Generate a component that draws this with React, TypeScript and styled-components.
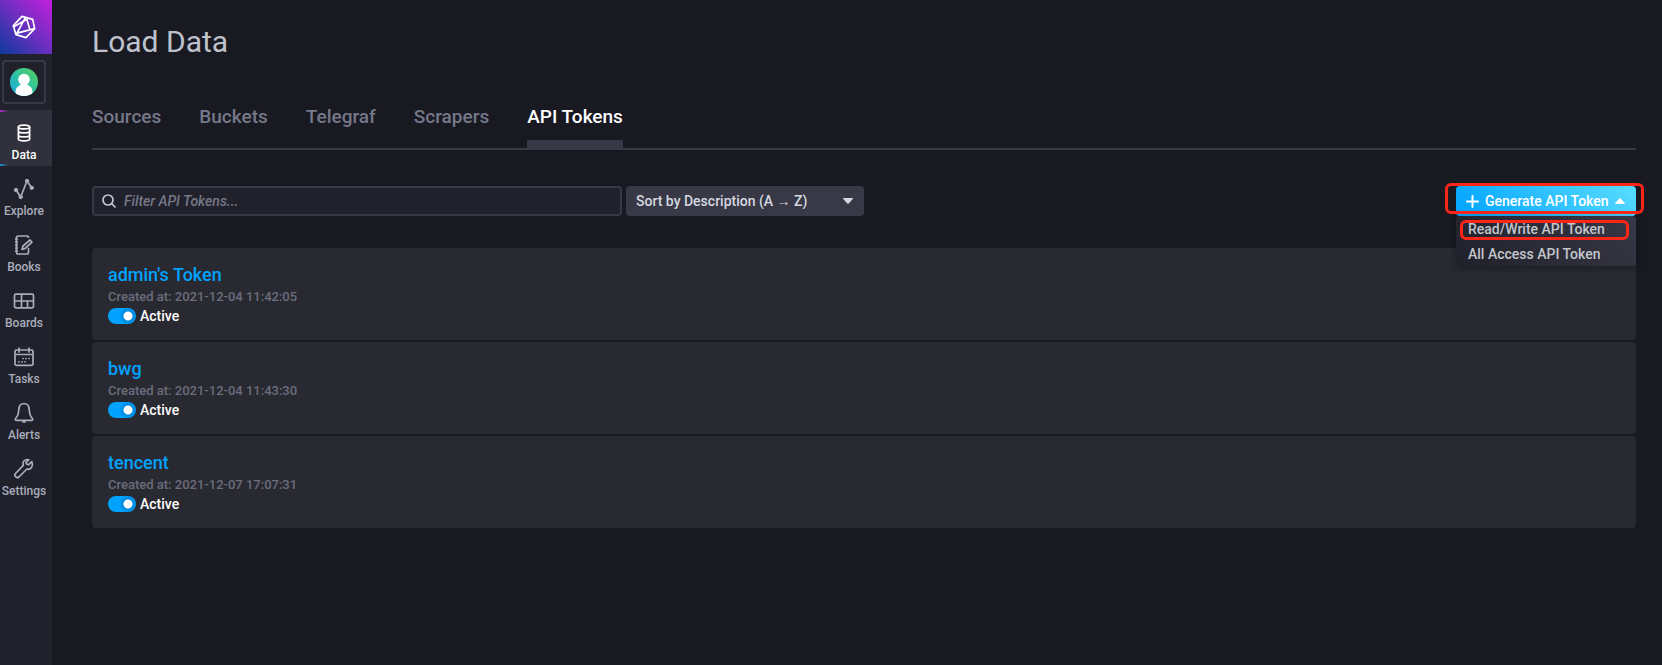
import React, { useState } from "react";
import styled, { createGlobalStyle } from "styled-components";

const GlobalStyle = createGlobalStyle`
  *, *::before, *::after { box-sizing: border-box; }
  body {
    margin: 0;
    background: #191922;
    color: #ffffff;
    font-family: Roboto, "Liberation Sans", sans-serif;
    font-weight: 500;
  }
  button, input, select { font-family: inherit; font-weight: inherit; }
`;

const Page = styled.div`
  display: flex;
  min-height: 100vh;
`;

const Sidebar = styled.nav`
  flex: 0 0 52px;
  display: flex;
  flex-direction: column;
  background: #21212b;
`;

const LogoLink = styled.a`
  display: flex;
  align-items: center;
  justify-content: center;
  height: 54px;
  padding-right: 4px;
  background: linear-gradient(45deg, #0b3a9c 0%, #6b2fc0 50%, #c41fdc 100%);
`;

const AvatarButton = styled.button`
  display: flex;
  align-items: center;
  justify-content: center;
  width: 44px;
  height: 44px;
  margin: 6px 2px;
  padding: 0;
  border: 2px solid #383846;
  border-radius: 4px;
  background: transparent;
`;

const NavItem = styled.a<{ $active?: boolean }>`
  display: flex;
  flex-direction: column;
  align-items: center;
  gap: 4px;
  height: 56px;
  padding: 12px 4px 0 0;
  font-size: 12px;
  line-height: 14px;
  white-space: nowrap;
  text-decoration: none;
  color: ${(p) => (p.$active ? "#ffffff" : "#a9adbb")};
  background: ${(p) =>
    p.$active
      ? "linear-gradient(90deg, #b02fd0, #31313d) top left / 8px 2px no-repeat, linear-gradient(90deg, #1a8fd8, #31313d) bottom left / 8px 2px no-repeat, #31313d"
      : "transparent"};

  svg { flex: none; }
`;

const Main = styled.main`
  flex: 1;
  min-width: 0;
  padding: 24px 26px 24px 40px;
`;

const Title = styled.h1`
  margin: 0;
  font-size: 30px;
  line-height: 36px;
  font-weight: 400;
  color: #bec2cc;
`;

const Tabs = styled.div`
  display: flex;
  gap: 38px;
  margin-top: 40px;
  border-bottom: 2px solid #383846;
`;

const Tab = styled.a<{ $active?: boolean }>`
  display: flex;
  flex-direction: column;
  height: 48px;
  padding-top: 5px;
  font-size: 19px;
  line-height: 24px;
  text-decoration: none;
  color: ${(p) => (p.$active ? "#ffffff" : "#757888")};

  &::after {
    content: "";
    height: 8px;
    margin-top: auto;
    border-radius: 2px 2px 0 0;
    background: ${(p) => (p.$active ? "#383846" : "transparent")};
  }
`;

const Toolbar = styled.div`
  display: flex;
  gap: 4px;
  margin-top: 36px;
`;

const SearchBox = styled.label`
  display: flex;
  align-items: center;
  gap: 8px;
  flex: 0 1 530px;
  height: 30px;
  padding: 0 8px;
  border: 2px solid #383846;
  border-radius: 4px;
  background: #21212b;
`;

const SearchInput = styled.input`
  flex: 1;
  min-width: 0;
  padding: 0;
  border: 0;
  outline: 0;
  background: transparent;
  font-size: 14px;
  line-height: 20px;
  color: #ffffff;

  &::placeholder {
    font-style: italic;
    color: #757888;
    opacity: 1;
  }
`;

const SortField = styled.div`
  flex: 0 0 238px;
  display: grid;
  align-items: center;

  & > * { grid-area: 1 / 1; }
  svg {
    justify-self: end;
    margin-right: 11px;
    color: #d5d8e0;
    pointer-events: none;
  }
`;

const SortSelect = styled.select`
  appearance: none;
  width: 100%;
  height: 30px;
  padding: 0 30px 0 10px;
  border: 0;
  border-radius: 4px;
  background: #383846;
  font-size: 14px;
  color: #d5d8e0;
`;

const Generate = styled.div`
  position: relative;
  flex: 0 0 180px;
  margin-left: auto;
`;

const GenerateButton = styled.button`
  display: flex;
  align-items: center;
  gap: 6px;
  width: 100%;
  height: 30px;
  padding: 0 11px 0 10px;
  border: 0;
  border-radius: 4px;
  background: linear-gradient(45deg, #00a3ff, #59dcff);
  font-size: 14px;
  white-space: nowrap;
  color: #ffffff;

  svg:last-child { margin-left: auto; }
`;

const Menu = styled.div`
  position: absolute;
  top: 30px;
  left: 0;
  right: 0;
  display: flex;
  flex-direction: column;
  height: 50px;
  border-radius: 4px;
  background: linear-gradient(45deg, #21212b, #383846);
  box-shadow: 0 2px 6px rgba(10, 10, 16, 0.4);
`;

const MenuItem = styled.button`
  height: 25px;
  padding: 0 12px;
  border: 0;
  background: transparent;
  font-size: 14px;
  text-align: left;
  color: #c3c5cc;
`;

const Highlight = styled.div<{ $inner?: boolean }>`
  position: absolute;
  inset: ${(p) => (p.$inner ? "34px 7px -24px 4px" : "-3px -8px 2px -11px")};
  border: 3px solid #fb2518;
  border-radius: 6px;
  pointer-events: none;
`;

const List = styled.div`
  display: flex;
  flex-direction: column;
  gap: 2px;
  margin-top: 32px;
`;

const Card = styled.article`
  display: flex;
  flex-direction: column;
  align-items: flex-start;
  height: 92px;
  padding: 16px;
  border-radius: 4px;
  background: #292932;
`;

const TokenName = styled.a`
  font-size: 18px;
  line-height: 22px;
  text-decoration: none;
  color: #00a3ff;
`;

const Created = styled.span`
  font-size: 13px;
  line-height: 22px;
  color: #6b6d7c;
`;

const ToggleLabel = styled.label`
  display: flex;
  align-items: center;
  gap: 4px;
  font-size: 14px;
  line-height: 16px;
`;

const Toggle = styled.input`
  appearance: none;
  width: 28px;
  height: 16px;
  margin: 0;
  border-radius: 8px;
  background: #434453;

  &:checked {
    background: radial-gradient(circle at 20px 8px, #ffffff 0 3px, #ffffff 4px, #0088dd 5px, #00a3ff 9px);
  }
`;

const CloudMark = () => (
  <svg width="24" height="24" viewBox="36 43 72 72" fill="none" stroke="#fff" strokeWidth="5" strokeLinejoin="round" aria-hidden="true">
    <path d="M66 47 98 56 104 84 78 111 48 102 40 75Z" />
    <path d="M40 79 82 55M76 51 50 99M80 54 90 88M104 84 48 98" />
  </svg>
);

const Avatar = () => (
  <svg width="28" height="28" viewBox="0 0 28 28" aria-hidden="true">
    <defs>
      <linearGradient id="avatar" x1="0" y1="1" x2="1" y2="0">
        <stop offset="0" stopColor="#18a5e8" />
        <stop offset="0.5" stopColor="#30c2a0" />
        <stop offset="1" stopColor="#58d05a" />
      </linearGradient>
      <clipPath id="round"><circle cx="14" cy="14" r="14" /></clipPath>
    </defs>
    <circle cx="14" cy="14" r="14" fill="url(#avatar)" />
    <g fill="#fff" clipPath="url(#round)">
      <circle cx="14" cy="11.5" r="5.800" />
      <path d="M10.500 14h7v3c3 .8 5 3.500 5 7v4h-17v-4c0-3.500 2-6.200 5-7Z" />
    </g>
  </svg>
);

const Icon = ({ children }: { children: React.ReactNode }) => (
  <svg width="22" height="22" viewBox="0 0 22 22" fill="none" stroke="currentColor" strokeWidth="1.700" strokeLinecap="round" strokeLinejoin="round" aria-hidden="true">
    {children}
  </svg>
);

const navItems = [
  {
    label: "Data",
    icon: (
      <>
        <ellipse cx="11" cy="5" rx="5.600" ry="1.900" />
        <path d="M5.400 5v12c0 2.600 11.200 2.600 11.200 0V5M5.400 9c0 2.600 11.200 2.600 11.200 0M5.400 13c0 2.600 11.200 2.600 11.200 0" />
      </>
    ),
  },
  {
    label: "Explore",
    icon: (
      <>
        <path d="M3 12 7.700 19 14 3 18.700 9.800" />
        <g fill="currentColor" strokeWidth="1">
          <circle cx="3" cy="12" r="1.700" />
          <circle cx="7.700" cy="19" r="1.700" />
          <circle cx="14" cy="3" r="1.700" />
          <circle cx="18.700" cy="9.800" r="1.700" />
        </g>
      </>
    ),
  },
  {
    label: "Books",
    icon: (
      <>
        <path d="M15.500 3.200 14.700 2H5.200Q3.500 2 3.500 3.700v14.600Q3.500 20 5.200 20h8.600q1.700 0 1.700-1.700v-3.800M9 15.500l1-3.500 7-6 2 2.200-7 6.300Z" />
        <path d="M2.700 5h1.600M2.700 8h1.600M2.700 11h1.600M2.700 14h1.600M2.700 17h1.600" />
      </>
    ),
  },
  {
    label: "Boards",
    icon: (
      <path d="M3 4.200h16q1.500 0 1.500 1.500v10.600q0 1.500-1.500 1.500H3q-1.500 0-1.500-1.500V5.700Q1.500 4.200 3 4.200ZM1.500 11h19M8.500 4.200v13.600M14.500 11v6.800" />
    ),
  },
  {
    label: "Tasks",
    icon: (
      <>
        <path d="M3.500 4h15q1.500 0 1.500 1.500v12.300q0 1.500-1.500 1.500h-15q-1.500 0-1.500-1.500V5.500Q2 4 3.500 4ZM2 8.500h18M6 2v4M16 2v4" />
        <path d="M10 12.500h.1M13 12.500h.1M16 12.500h.1M6 15.800h.1M9 15.800h.1M12 15.800h.1" />
      </>
    ),
  },
  {
    label: "Alerts",
    icon: (
      <path d="M11 1.500c-3.500 0-5 2.500-5.200 6-.2 4.500-1.200 7-3.300 9.200-.5.800 0 1.600.8 1.600h15.400c.8 0 1.300-.8.8-1.600-2.100-2.200-3.100-4.700-3.300-9.200-.2-3.500-1.700-6-5.200-6ZM10 20h2" />
    ),
  },
  {
    label: "Settings",
    icon: (
      <path d="M18.700 3.700 15.500 6.800 13.500 6 13 4.300l2.900-2.600c-4-1-6.800 2-5.600 5.600L2.500 15.500c-2 2 1.300 5.400 3.400 3.500l8-8c3.600 1.400 6.800-3 4.800-7.300Z" />
    ),
  },
];

const tabs = ["Sources", "Buckets", "Telegraf", "Scrapers", "API Tokens"];

const tokens = [
  { name: "admin's Token", created: "2021-12-04 11:42:05" },
  { name: "bwg", created: "2021-12-04 11:43:30" },
  { name: "tencent", created: "2021-12-07 17:07:31" },
];

const Caret = ({ up }: { up?: boolean }) => (
  <svg width="10" height="6" viewBox="0 0 10 6" fill="currentColor" aria-hidden="true">
    <path d={up ? "M0 6 .3 5 4.300.5q.7-.7 1.400 0L9.700 5 10 6Z" : "M0 0h10L9.700 1 5.700 5.500q-.7.700-1.400 0L.3 1Z"} />
  </svg>
);

export default function App() {
  const [open, setOpen] = useState(true);

  return (
    <>
      <GlobalStyle />
      <Page>
        <Sidebar aria-label="Main">
          <LogoLink href="#home" aria-label="Home"><CloudMark /></LogoLink>
          <AvatarButton type="button" aria-label="Account"><Avatar /></AvatarButton>
          {navItems.map((item) => (
            <NavItem key={item.label} href={`#${item.label.toLowerCase()}`} $active={item.label === "Data"}>
              <Icon>{item.icon}</Icon>
              {item.label}
            </NavItem>
          ))}
        </Sidebar>
        <Main>
          <Title>Load Data</Title>
          <Tabs>
            {tabs.map((tab) => (
              <Tab key={tab} href="#tab" $active={tab === "API Tokens"}>{tab}</Tab>
            ))}
          </Tabs>
          <Toolbar>
            <SearchBox>
              <svg width="14" height="14" viewBox="0 0 14 14" fill="none" stroke="#c3c5d0" strokeWidth="1.700" strokeLinecap="round" aria-hidden="true">
                <circle cx="6" cy="6" r="5" />
                <path d="m9.700 9.700 3.300 3.300" />
              </svg>
              <SearchInput type="text" placeholder="Filter API Tokens..." aria-label="Filter API Tokens" />
            </SearchBox>
            <SortField>
              <SortSelect aria-label="Sort tokens">
                <option>Sort by Description (A → Z)</option>
                <option>Sort by Description (Z → A)</option>
              </SortSelect>
              <Caret />
            </SortField>
            <Generate>
              <GenerateButton type="button" aria-expanded={open} onClick={() => setOpen(!open)}>
                <svg width="13" height="13" viewBox="0 0 13 13" stroke="#fff" strokeWidth="2" strokeLinecap="round" aria-hidden="true">
                  <path d="M6.500 1v11M1 6.500h11" />
                </svg>
                Generate API Token
                <Caret up />
              </GenerateButton>
              {open && (
                <Menu>
                  <MenuItem type="button">Read/Write API Token</MenuItem>
                  <MenuItem type="button">All Access API Token</MenuItem>
                </Menu>
              )}
              <Highlight />
              <Highlight $inner />
            </Generate>
          </Toolbar>
          <List>
            {tokens.map((token) => (
              <Card key={token.name}>
                <TokenName href="#token">{token.name}</TokenName>
                <Created>Created at: {token.created}</Created>
                <ToggleLabel>
                  <Toggle type="checkbox" defaultChecked />
                  Active
                </ToggleLabel>
              </Card>
            ))}
          </List>
        </Main>
      </Page>
    </>
  );
}
